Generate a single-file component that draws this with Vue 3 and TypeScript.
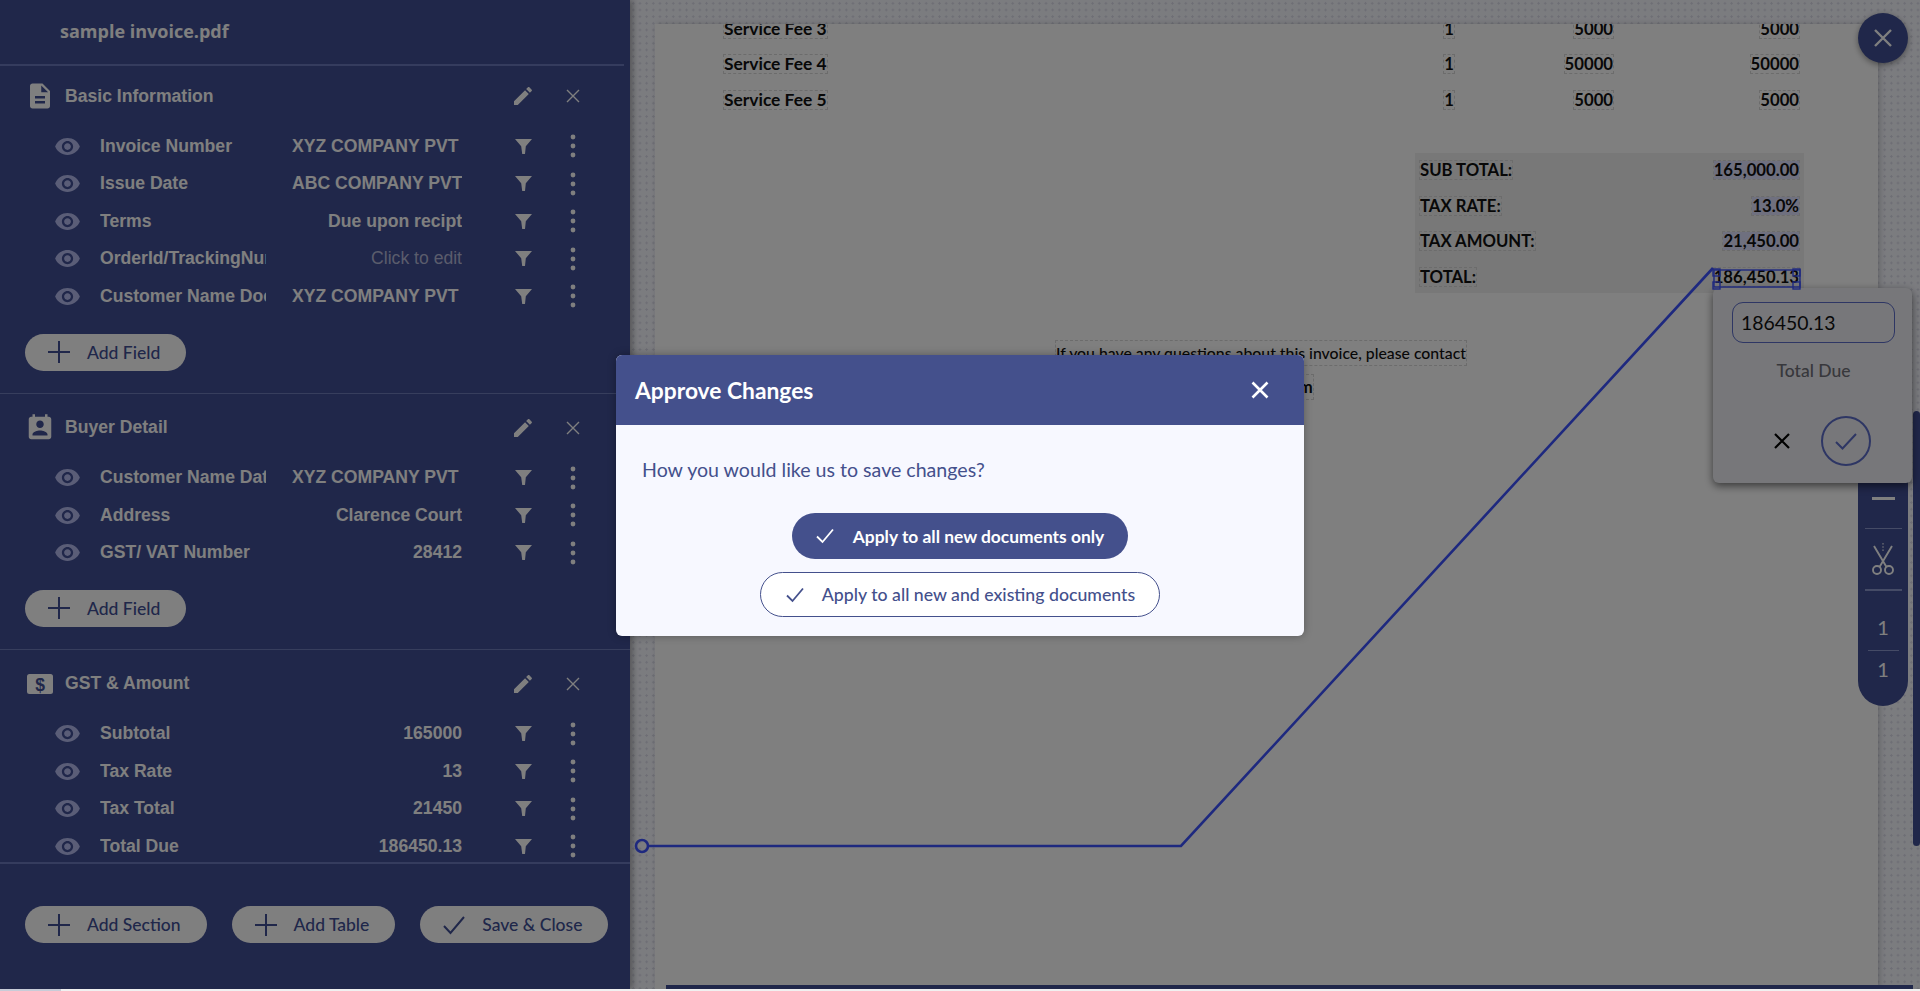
<script setup lang="ts">
interface Field { label: string; value: string; start?: boolean; placeholder?: boolean }
interface Section { title: string; icon: string; fields: Field[]; add: boolean }

const ICONS: Record<string, string> = {
  doc: 'M14 2H6c-1.1 0-1.99.9-1.99 2L4 20c0 1.1.89 2 1.99 2H18c1.1 0 2-.9 2-2V8l-6-6zm2 16H8v-2h8v2zm0-4H8v-2h8v2zm-3-5V3.5L18.5 9H13z',
  contact: 'M19 3h-1V1h-2v2H8V1H6v2H5c-1.11 0-2 .9-2 2v14c0 1.1.89 2 2 2h14c1.1 0 2-.9 2-2V5c0-1.1-.9-2-2-2zm-7 3c1.66 0 3 1.34 3 3s-1.34 3-3 3-3-1.34-3-3 1.34-3 3-3zm6 12H6v-1c0-2 4-3.1 6-3.1s6 1.1 6 3.1v1z'
}

const sections: Section[] = [
  {
    title: 'Basic Information', icon: 'doc', add: true,
    fields: [
      { label: 'Invoice Number', value: 'XYZ COMPANY PVT', start: true },
      { label: 'Issue Date', value: 'ABC COMPANY PVT' },
      { label: 'Terms', value: 'Due upon recipt' },
      { label: 'OrderId/TrackingNumber', value: 'Click to edit', placeholder: true },
      { label: 'Customer Name Document', value: 'XYZ COMPANY PVT', start: true }
    ]
  },
  {
    title: 'Buyer Detail', icon: 'contact', add: true,
    fields: [
      { label: 'Customer Name Data', value: 'XYZ COMPANY PVT', start: true },
      { label: 'Address', value: 'Clarence Court' },
      { label: 'GST/ VAT Number', value: '28412' }
    ]
  },
  {
    title: 'GST & Amount', icon: 'money', add: false,
    fields: [
      { label: 'Subtotal', value: '165000' },
      { label: 'Tax Rate', value: '13' },
      { label: 'Tax Total', value: '21450' },
      { label: 'Total Due', value: '186450.13' }
    ]
  }
]

const lineItems = [
  { name: 'Service Fee 3', qty: '1', rate: '5000', amount: '5000' },
  { name: 'Service Fee 4', qty: '1', rate: '50000', amount: '50000' },
  { name: 'Service Fee 5', qty: '1', rate: '5000', amount: '5000' }
]

const totals = [
  { label: 'SUB TOTAL:', value: '165,000.00', mark: true },
  { label: 'TAX RATE:', value: '13.0%', mark: true },
  { label: 'TAX AMOUNT:', value: '21,450.00', mark: true },
  { label: 'TOTAL:', value: '186,450.13', mark: false }
]

const handles = [
  [1713, 269], [1793, 269], [1713, 282], [1793, 282]
]
</script>

<template>
  <div class="screen">
    <div class="stage">
      <aside class="sidebar">
        <div class="titlebar">sample invoice.pdf</div>
        <div class="sections">
          <section v-for="s in sections" :key="s.title" class="section">
            <header class="sec-head">
              <svg v-if="s.icon !== 'money'" class="sec-icon" viewBox="0 0 24 24"><path :d="ICONS[s.icon]" /></svg>
              <svg v-else class="sec-icon" viewBox="0 0 24 24">
                <rect x="1.6" y="4" width="20.8" height="16" rx="2" />
                <text x="12" y="17.5" text-anchor="middle" class="dollar">$</text>
              </svg>
              <span class="sec-title">{{ s.title }}</span>
              <svg class="sec-edit" viewBox="0 0 24 24"><path d="M3 17.25V21h3.75L17.81 9.94l-3.75-3.75L3 17.25zM20.71 7.04c.39-.39.39-1.02 0-1.41l-2.34-2.34c-.39-.39-1.02-.39-1.41 0l-1.83 1.83 3.75 3.75 1.83-1.83z" /></svg>
              <svg class="sec-close" viewBox="0 0 24 24"><path d="M6 6l12 12M18 6L6 18" /></svg>
            </header>
            <div v-for="f in s.fields" :key="f.label" class="row">
              <svg class="eye" viewBox="0 0 24 24"><path d="M12 4.5C7 4.5 2.73 7.61 1 12c1.73 4.39 6 7.5 11 7.5s9.27-3.11 11-7.5c-1.73-4.39-6-7.5-11-7.5zM12 17c-2.76 0-5-2.24-5-5s2.24-5 5-5 5 2.24 5 5-2.24 5-5 5zm0-8c-1.66 0-3 1.34-3 3s1.34 3 3 3 3-1.34 3-3-1.34-3-3-3z" /></svg>
              <span class="label">{{ f.label }}</span>
              <span class="value" :class="{ start: f.start, placeholder: f.placeholder }">{{ f.value }}</span>
              <svg class="funnel" viewBox="0 0 17 15"><path d="M0 0h17l-6.2 7.2-.8 7.8H7.2L6.2 7.2z" /></svg>
              <svg class="kebab" viewBox="0 0 6 24"><circle cx="3" cy="3" r="2.4" /><circle cx="3" cy="12" r="2.4" /><circle cx="3" cy="21" r="2.4" /></svg>
            </div>
            <button v-if="s.add" class="pill add-field">
              <svg class="pill-icon" viewBox="0 0 22 22"><path d="M11 0v22M0 11h22" /></svg>
              <span>Add Field</span>
            </button>
          </section>
        </div>
        <footer class="side-foot">
          <button class="pill">
            <svg class="pill-icon" viewBox="0 0 22 22"><path d="M11 0v22M0 11h22" /></svg>
            <span>Add Section</span>
          </button>
          <button class="pill">
            <svg class="pill-icon" viewBox="0 0 22 22"><path d="M11 0v22M0 11h22" /></svg>
            <span>Add Table</span>
          </button>
          <button class="pill">
            <svg class="pill-icon" viewBox="0 0 22 22"><path d="M1 12l6.5 7L21 3" /></svg>
            <span>Save &amp; Close</span>
          </button>
        </footer>
      </aside>

      <main class="viewer">
        <div class="page">
          <div class="doc">
            <div v-for="item in lineItems" :key="item.name" class="line">
              <span><i class="tok name">{{ item.name }}</i></span>
              <span class="num"><i class="tok">{{ item.qty }}</i></span>
              <span class="num"><i class="tok">{{ item.rate }}</i></span>
              <span class="num"><i class="tok">{{ item.amount }}</i></span>
            </div>
            <div class="totals">
              <div v-for="t in totals" :key="t.label" class="total-row">
                <i class="tok">{{ t.label }}</i>
                <i class="tok" :class="{ mark: t.mark }">{{ t.value }}</i>
              </div>
            </div>
            <div class="note">
              <p><i class="tok regular">If you have any questions about this invoice, please contact</i></p>
              <p><i class="tok">info@xyz.com</i></p>
            </div>
          </div>
        </div>

        <button class="fab">
          <svg viewBox="0 0 24 24"><path d="M4 4l16 16M20 4L4 20" /></svg>
        </button>

        <div class="toolbar">
          <div class="tool tool-minus"><span class="minus"></span></div>
          <div class="tool tool-cut">
            <svg viewBox="0 0 24 32">
              <path class="dash" d="M12 0v9" />
              <path d="M3 3l12.5 21M21 3L8.5 24" />
              <circle cx="6" cy="27" r="4" />
              <circle cx="18" cy="27" r="4" />
            </svg>
          </div>
          <div class="tool tool-page">1</div>
          <div class="tool tool-total">1</div>
        </div>

        <div class="vbar"></div>
        <div class="hbar"></div>

        <div class="popup">
          <div class="popup-input">186450.13</div>
          <div class="popup-label">Total Due</div>
          <div class="popup-actions">
            <svg class="popup-x" viewBox="0 0 16 16"><path d="M1 1l14 14M15 1L1 15" /></svg>
            <span class="popup-ok">
              <svg viewBox="0 0 22 18"><path d="M1 10l6.5 6.5L21 2" /></svg>
            </span>
          </div>
        </div>
      </main>

      <svg class="connector" viewBox="0 0 1920 989">
        <circle cx="642" cy="846" r="6" />
        <path d="M648 846H1181L1713 268" />
        <rect x="1714" y="270" width="86" height="17" />
        <rect v-for="h in handles" :key="h.join()" :x="h[0]" :y="h[1]" width="7" height="7" />
      </svg>

      <div class="overlay">
        <div class="modal">
          <div class="modal-head">
            <span>Approve Changes</span>
            <svg viewBox="0 0 18 18"><path d="M1.5 1.5l15 15M16.5 1.5l-15 15" /></svg>
          </div>
          <div class="modal-body">
            <p class="question">How you would like us to save changes?</p>
            <button class="choice primary">
              <svg viewBox="0 0 18 16"><path d="M1 8.5L6.5 14 17 1.5" /></svg>
              <span>Apply to all new documents only</span>
            </button>
            <button class="choice outline">
              <svg viewBox="0 0 18 16"><path d="M1 8.5L6.5 14 17 1.5" /></svg>
              <span>Apply to all new and existing documents</span>
            </button>
          </div>
        </div>
      </div>
    </div>
    <div class="strip"><span class="strip-tab"></span></div>
  </div>
</template>

<style>
html, body { margin: 0; background: #fff; overflow: hidden; }
</style>

<style scoped>
.screen { width: 1920px; height: 991px; display: flex; flex-direction: column; }
.stage { position: relative; height: 989px; display: flex; overflow: hidden; }

/* sidebar */
.sidebar {
  width: 630px; flex: none; height: 989px; display: flex; flex-direction: column;
  background: #404e94; box-shadow: 3px 0 6px rgba(0, 0, 0, .3); position: relative; z-index: 1;
}
.titlebar {
  height: 66px; flex: none; box-sizing: border-box; padding-left: 60px;
  width: 624px; border-bottom: 2px solid #6a78bc;
  font: 700 18px/62px "Open Sans", sans-serif; color: #fff;
}
.sections { flex: 1; min-height: 0; overflow: hidden; }
.section { border-bottom: 1px solid #6f7cba; padding-bottom: 22px; }
.section:first-child { margin-top: -3px; }
.sec-head { height: 66px; display: flex; align-items: center; margin-bottom: -1.75px; }
.section + .section .sec-head { margin-top: 1px; }
.sec-icon { width: 30px; height: 30px; margin-left: 25px; fill: #fff; flex: none; overflow: visible; }
.sec-icon .dollar { font: 700 14px "Liberation Sans", sans-serif; fill: #404e94; }
.sec-title {
  margin-left: 10px; font: 700 17.6px "Liberation Sans", Arial, sans-serif; color: #fff; width: 446px; flex: none;
}
.sec-edit { width: 24px; height: 24px; fill: #fff; flex: none; }
.sec-close { width: 24px; height: 24px; margin-left: 26px; fill: none; stroke: #fff; stroke-width: 1.4; flex: none; }

.row {
  height: 37.5px; display: flex; align-items: center; padding-left: 54px;
  font: 700 17.6px "Liberation Sans", Arial, sans-serif; color: #fff;
}
.eye { width: 27px; height: 27px; fill: #b4bbee; flex: none; }
.label { width: 166px; margin-left: 19px; overflow: hidden; white-space: nowrap; flex: none; }
.value { width: 170px; margin-left: 26px; overflow: hidden; white-space: nowrap; text-align: right; flex: none; }
.value.start { text-align: left; }
.value.placeholder { font-weight: 400; color: #b4b8d8; }
.funnel { width: 17px; height: 15px; margin-left: 53px; fill: #fff; flex: none; }
.kebab { width: 6px; height: 24px; margin-left: 38px; fill: #fff; flex: none; }

.pill {
  height: 37px; border: 0; border-radius: 19px; background: #fff; color: #404e94; padding: 0 26px 0 23px;
  display: inline-flex; align-items: center; font: 500 17.5px "Lato", sans-serif; flex: none;
}
.pill-icon { width: 22px; height: 22px; margin-right: 17px; fill: none; stroke: #404e94; stroke-width: 2; flex: none; }
.add-field { margin: 19px 0 0 25px; }
.section + .section .add-field { margin-top: 18px; }
.side-foot {
  flex: none; height: 127px; box-sizing: border-box; border-top: 2px solid #6a78bc; padding: 42px 0 0 25px;
  display: flex; gap: 25px; align-items: flex-start;
}

/* viewer */
.viewer {
  flex: 1; position: relative; box-sizing: border-box; padding: 24px 42px 0 25px; min-width: 0;
  background-color: #f7f8ff;
  background-image: radial-gradient(circle, #dcddea 1px, transparent 1.2px);
  background-size: 6.67px 6.67px;
}
.page { height: 965px; background: #fff; overflow: hidden; box-shadow: 2px 0 6px rgba(0, 0, 0, .18); }
.doc { margin-top: -13px; padding-left: 69px; font: 700 16.7px/18px "Lato", sans-serif; color: #101010; }
.tok { font-style: normal; display: inline-block; outline: 1px dashed #d8d8d8; outline-offset: 0; }
.tok.name { font-size: 17.4px; }
.tok.regular { font-weight: 500; font-size: 15.8px; }
.tok.mark { background: #dfe1ff; }
.line { height: 35.5px; display: grid; grid-template-columns: 690px 40px 159px 186px; align-items: center; }
.num { text-align: right; }
.totals { margin: 35px 0 0 691px; width: 389px; height: 140px; box-sizing: border-box; padding: 0 5px; background: #f0f0f0; }
.total-row { height: 35.5px; display: flex; justify-content: space-between; align-items: center; }
.note { margin: 48px 0 0; width: 1074px; text-align: center; }
.note p { margin: 0; height: 34px; line-height: 24px; }

.fab {
  position: absolute; top: 13px; right: 12px; width: 50px; height: 50px; border-radius: 50%; border: 0; padding: 0;
  background: #404e94; display: flex; align-items: center; justify-content: center; box-shadow: 0 2px 6px rgba(0, 0, 0, .4);
}
.fab svg { width: 24px; height: 24px; fill: none; stroke: #fff; stroke-width: 2.4; }

.toolbar {
  position: absolute; right: 12px; bottom: 283px; width: 50px; background: #404e94; border-radius: 0 0 25px 25px;
  padding-bottom: 19px; color: #fff; font: 400 20px "Lato", sans-serif; display: flex; flex-direction: column; align-items: center;
}
.tool { width: 37px; display: flex; align-items: center; justify-content: center; box-sizing: border-box; }
.tool-minus { height: 60px; border-bottom: 1px solid #8a96cc; }
.minus { width: 23px; height: 3px; background: #fff; }
.tool-cut { height: 62px; border-bottom: 2px solid #8a96cc; }
.tool-cut svg { width: 24px; height: 32px; fill: none; stroke: #fff; stroke-width: 1.9; }
.tool-cut .dash { stroke-dasharray: 1.6 1.6; stroke-width: 1; }
.tool-page { height: 60px; padding-top: 12px; border-bottom: 1px solid #8a96cc; width: 31px; }
.tool-total { height: 36px; }

.vbar { position: absolute; right: 0; top: 411px; bottom: 143px; width: 7px; background: #404e94; border-radius: 4px; }
.hbar { position: absolute; left: 36px; right: 7px; bottom: 0; height: 4px; background: #404e94; }

.popup {
  position: absolute; right: 8px; top: 288px; width: 199px; height: 195px; box-sizing: border-box; padding: 14px 17px 0 19px;
  background: #eeeff4; border-radius: 6px; box-shadow: 0 3px 8px rgba(0, 0, 0, .55); font-family: "Lato", sans-serif;
}
.popup-input {
  height: 41px; box-sizing: border-box; border: 1px solid #5c6cc8; border-radius: 11px; padding-left: 8px;
  font: 400 19.4px/39px "Lato", sans-serif; color: #111;
}
.popup-label { margin-top: 16px; text-align: center; font: 500 17.5px/24px "Lato", sans-serif; color: #707078; }
.popup-actions { margin-top: 33px; display: flex; align-items: center; }
.popup-x { width: 16px; height: 16px; margin-left: 42px; fill: none; stroke: #000; stroke-width: 2.2; }
.popup-ok {
  margin-left: 31px; width: 50px; height: 50px; box-sizing: border-box; border: 2px solid #5c6cc8; border-radius: 50%;
  display: flex; align-items: center; justify-content: center;
}
.popup-ok svg { width: 22px; height: 18px; fill: none; stroke: #5c6cc8; stroke-width: 2; }

.connector { position: absolute; left: 0; top: 0; width: 1920px; height: 989px; z-index: 2; fill: none; stroke: #3d52ff; stroke-width: 2.6; }
.connector rect { stroke-width: 1.4; }

/* modal */
.overlay {
  position: absolute; inset: 0; z-index: 3; background: rgba(0, 0, 0, .5); padding-top: 2px; box-sizing: border-box;
  display: flex; align-items: center; justify-content: center;
}
.modal {
  width: 688px; height: 281px; border-radius: 6px; overflow: hidden; background: #f7f8ff;
  font-family: "Lato", sans-serif; box-shadow: 0 0 8px rgba(0, 0, 0, .3);
}
.modal-head {
  height: 69px; background: #44508c; color: #fff; padding: 0 35px 1px 19px; display: flex; align-items: center;
  justify-content: space-between; font: 700 22.8px "Lato", sans-serif;
}
.modal-head svg { width: 18px; height: 18px; fill: none; stroke: #fff; stroke-width: 2.6; }
.modal-body { padding: 33px 26px 0; display: flex; flex-direction: column; align-items: center; }
.question { align-self: flex-start; margin: 0 0 31px; font: 400 19.6px/24px "Lato", sans-serif; color: #44508c; }
.choice {
  display: inline-flex; align-items: center; border-radius: 24px; box-sizing: border-box; font-family: "Lato", sans-serif;
}
.choice svg { width: 18px; height: 16px; fill: none; stroke-width: 1.8; flex: none; }
.primary { height: 46px; padding: 0 24px 0 24px; background: #44508c; border: 0; color: #fff; font-weight: 700; font-size: 17.4px; margin-bottom: 13px; }
.primary svg { stroke: #fff; margin-right: 19px; }
.outline { height: 45px; padding: 0 24px 0 25px; background: #fff; border: 1px solid #44508c; color: #44508c; font-weight: 500; font-size: 17.7px; }
.outline svg { stroke: #44508c; margin-right: 18px; }

.strip { height: 2px; background: #f0f0f0; display: flex; }
.strip-tab { width: 61px; background: #c8ccd8; }
</style>
